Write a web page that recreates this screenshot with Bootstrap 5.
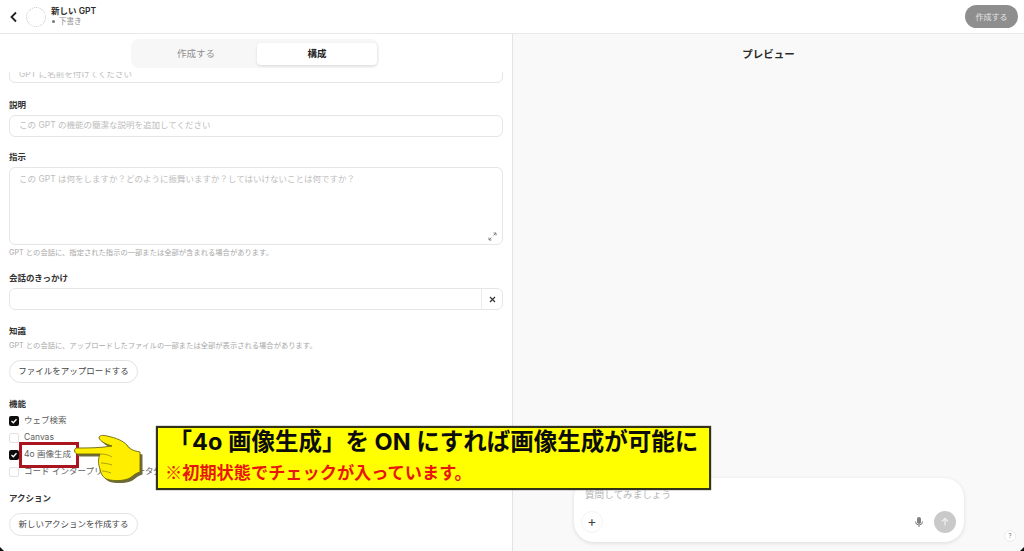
<!DOCTYPE html>
<html lang="ja"><head><meta charset="utf-8"><title>新しい GPT</title>
<link href="https://cdn.jsdelivr.net/npm/bootstrap@5.3.0/dist/css/bootstrap.min.css" rel="stylesheet">
<style>
html,body{height:551px;overflow:hidden;background:#fff}
body{font-family:"Inter","Noto Sans CJK JP",sans-serif;font-size:8.5px;color:#222;position:relative}
.top-bar{height:34px;border-bottom:1px solid #e8e8e8;padding:0 6px 0 9px}
.ghost-avatar{width:20px;height:20px;border:1px dotted #c4c4c4;border-radius:50%;margin:0 5px 0 8px}
.gpt-title{font-size:8.5px;font-weight:600;line-height:11px;color:#2b2b2b}
.gpt-sub{font-size:7.5px;line-height:10px;color:#8a8a8a}
.mini-dot{display:inline-block;width:3px;height:3px;border-radius:50%;background:#777;margin:0 4px 1px 1px}
.make-btn{width:53px;height:23px;background:#8e8e8e;color:#e4e4e4;font-size:8px;border-radius:12px;border:0;padding:0}
.split{height:517px}
.pane-left{width:513px;border-right:1px solid #e3e3e3;padding:31px 9px 0 9px;position:relative;overflow:hidden;flex:none}
.pane-left::before{content:"";position:absolute;left:0;right:0;top:0;height:38px;background:#fff;z-index:1}
.pane-right{flex:1;background:#f9f9f9;position:relative}
.tabs-pill{position:absolute;left:131px;top:5px;width:248px;height:29px;background:#f7f7f7;border-radius:8px;padding:4px 2px 3px 4px;z-index:2}
.tab-item{flex:1;font-size:9.500px;color:#8f8f8f;text-align:center;line-height:22px}
.tab-item.on{background:#fff;color:#222;font-weight:700;border-radius:4px;box-shadow:0 1px 3px rgba(0,0,0,.12);flex:none;width:120px}
.tab-off{width:122px;flex:none}
.fake-input{height:22px;border:1px solid #e6e6e6;border-radius:6px;padding:0 9px;color:#bdbdbd;font-size:8.5px;line-height:19px;background:#fff;margin-bottom:14px}
.clip-input{margin-bottom:16px;height:18px;line-height:12px;padding-top:2px;overflow:hidden}
.fld-label{font-size:8.5px;font-weight:700;color:#333;line-height:12px;margin-bottom:4px}
.area-box{height:78px;border:1px solid #e6e6e6;border-radius:6px;padding:5px 9px;color:#bdbdbd;line-height:12px;position:relative;margin-bottom:2px}
.grow-ico{position:absolute;right:5px;bottom:3px}
.hint{font-size:7.3px;line-height:11px;color:#a8a8a8}
.hint-a{margin-bottom:14px}
.hint-b{margin-bottom:9px;margin-top:-1px}
.x-cell{width:21px;border-left:1px solid #ececec;color:#333}
.start-row{height:22px;border:1px solid #e6e6e6;border-radius:6px;margin-bottom:15px}
.pill-btn{width:129px;height:23px;border:1px solid #e3e3e3;border-radius:12px;background:#fff;font-size:8.5px;color:#444;padding:0;display:block}
.gap-after{margin-bottom:15px}
.feat-label{margin-bottom:2px}
.act-label{margin-bottom:9px}
.chk-row{height:17px;font-size:8.5px;color:#5e5e5e;line-height:17px}
.chk-last{margin-bottom:12px}
.chk-on,.chk-off{width:10px;height:10px;border-radius:2px;flex:none;margin-right:5px}
.chk-on{background:#0d0d0d;display:flex;align-items:center;justify-content:center}
.chk-off{border:1px solid #e2e2e2}
.preview-ttl{font-size:10.500px;font-weight:700;line-height:14px;color:#2b2b2b;padding-top:14px;text-align:center}
.chat-box{position:absolute;left:61px;top:444px;width:390px;height:64px;background:#fff;border-radius:20px;box-shadow:0 1px 4px rgba(0,0,0,.12);padding:10px 8px 9px 11px}
.chat-ph{color:#b5b5b5;font-size:9.600px;line-height:14px}
.send-dot{width:22px;height:22px;border-radius:50%;background:#c9c9c9}
.plus-dot{width:22px;height:22px;border-radius:50%;margin-left:-4px;color:#444;font-size:14px;line-height:18px;text-align:center;border:1px solid #f4f4f4}
.mic-ico{margin-right:10px}
.qmark{position:absolute;left:491px;top:496px;width:12px;height:12px;border:1px solid #ececec;border-radius:50%;text-align:center;font-size:6px;line-height:10px;color:#777;background:#fff}
.callout{position:absolute;left:156px;top:426px;width:555px;height:64px;background:#ff0;border:2px solid #33331a;box-shadow:0 0 1px #333;z-index:5;padding:0 7px}
.call-main{font-size:23.500px;font-weight:700;color:#0c0c0c;line-height:28px;text-align:center;white-space:nowrap;font-family:"Inter","Noto Sans CJK JP",sans-serif}
.call-sub{font-size:17.200px;font-weight:700;color:#e8170e;line-height:26px;margin-top:3px;white-space:nowrap;font-family:"Noto Sans CJK JP",sans-serif}
.red-frame{position:absolute;left:19px;top:442px;width:60px;height:26px;border:3px solid #a9151f;z-index:3}
.hand-ico{position:absolute;left:74px;top:434px;z-index:4}
.corner-a,.corner-b{position:absolute;width:4px;height:4px;background:#111;z-index:6;bottom:0}
.corner-a{left:0;clip-path:polygon(0 0,0 100%,100% 100%)}
.corner-b{right:0;clip-path:polygon(100% 0,100% 100%,0 100%)}
</style></head><body>
<div class="top-bar d-flex align-items-center">
  <svg width="9" height="12" viewBox="0 0 9 12"><path d="M7 1.500 2.500 6 7 10.500" fill="none" stroke="#222" stroke-width="1.800"/></svg>
  <div class="ghost-avatar"></div>
  <div><div class="gpt-title">新しい GPT</div><div class="gpt-sub"><span class="mini-dot"></span>下書き</div></div>
  <button class="make-btn ms-auto" type="button">作成する</button>
</div>
<div class="split d-flex">
  <div class="pane-left">
    <div class="tabs-pill d-flex"><div class="tab-item tab-off">作成する</div><div class="tab-item on">構成</div></div>
    <div class="fake-input clip-input">GPT に名前を付けてください</div>
    <div class="fld-label">説明</div>
    <div class="fake-input">この GPT の機能の簡潔な説明を追加してください</div>
    <div class="fld-label">指示</div>
    <div class="area-box">この GPT は何をしますか？どのように振舞いますか？してはいけないことは何ですか？
      <svg class="grow-ico" width="9" height="9" viewBox="0 0 9 9"><path d="M5.500 1H8v2.500M3.500 8H1V5.500M8 1 5.500 3.500M1 8l2.500-2.500" fill="none" stroke="#777" stroke-width=".9"/></svg>
    </div>
    <div class="hint hint-a">GPT との会話に、指定された指示の一部または全部が含まれる場合があります。</div>
    <div class="fld-label">会話のきっかけ</div>
    <div class="start-row d-flex justify-content-end"><div class="x-cell d-flex align-items-center justify-content-center"><svg width="7" height="7" viewBox="0 0 7 7"><path d="m1 1 5 5M6 1 1 6" stroke="#333" stroke-width="1.200"/></svg></div></div>
    <div class="fld-label">知識</div>
    <div class="hint hint-b">GPT との会話に、アップロードしたファイルの一部または全部が表示される場合があります。</div>
    <button class="pill-btn gap-after" type="button">ファイルをアップロードする</button>
    <div class="fld-label feat-label">機能</div>
    <div class="chk-row d-flex align-items-center"><span class="chk-on"><svg width="8" height="8" viewBox="0 0 8 8"><path d="m1.500 4 1.800 1.800L6.500 2.300" fill="none" stroke="#fff" stroke-width="1.300"/></svg></span><span>ウェブ検索</span></div>
    <div class="chk-row d-flex align-items-center"><span class="chk-off"></span><span>Canvas</span></div>
    <div class="chk-row d-flex align-items-center"><span class="chk-on"><svg width="8" height="8" viewBox="0 0 8 8"><path d="m1.500 4 1.800 1.800L6.500 2.300" fill="none" stroke="#fff" stroke-width="1.300"/></svg></span><span>4o 画像生成</span></div>
    <div class="chk-row chk-last d-flex align-items-center"><span class="chk-off"></span><span>コード インタープリターとデータ分析</span></div>
    <div class="fld-label act-label">アクション</div>
    <button class="pill-btn" type="button">新しいアクションを作成する</button>
  </div>
  <div class="pane-right">
    <div class="preview-ttl">プレビュー</div>
    <div class="chat-box d-flex flex-column justify-content-between">
      <div class="chat-ph">質問してみましょう</div>
      <div class="d-flex align-items-center">
        <div class="plus-dot">+</div>
        <svg class="ms-auto mic-ico" width="10" height="12" viewBox="0 0 10 12"><rect x="3" y="1" width="4" height="7" rx="2" fill="#808080"/><path d="M1.500 5.500a3.500 3.500 0 0 0 7 0M5 9v2" fill="none" stroke="#808080"/></svg>
        <div class="send-dot d-flex align-items-center justify-content-center"><svg width="10" height="10" viewBox="0 0 10 10"><path d="M5 8.500v-7M2 4.500l3-3 3 3" fill="none" stroke="#eee" stroke-width="1.300"/></svg></div>
      </div>
    </div>
    <div class="qmark">?</div>
  </div>
</div>
<div class="red-frame"></div>
<svg class="hand-ico" width="72" height="52" viewBox="0 0 72 52">
  <path d="M2 14C14 14 26 14 38 12C31 10 26 7 25 4C25 1 29 1 33 2C43 4 49 7 53 11C55 15 60 17 66 18V38C62 39 60 41 56 44C50 47 42 47 36 46C30 45 27 41 26 35C24 30 24 25 26 20C18 20 10 20 3 20C0 19 0 15 2 14Z" fill="#6e6a3a" transform="translate(2.500 2.500)"/>
  <path d="M2 14C14 14 26 14 38 12C31 10 26 7 25 4C25 1 29 1 33 2C43 4 49 7 53 11C55 15 60 17 66 18V38C62 39 60 41 56 44C50 47 42 47 36 46C30 45 27 41 26 35C24 30 24 25 26 20C18 20 10 20 3 20C0 19 0 15 2 14Z" fill="#ffee00" stroke="#6a6510" stroke-width=".9"/>
  <path d="M26 20C31 20 35 21 38 23M27 29C31 29 35 30 38 31M28 37C31 37 34 38 37 39" fill="none" stroke="#8a8410" stroke-width=".7"/>
</svg>
<div class="callout">
  <div class="call-main">「4o 画像生成」を ON にすれば画像生成が可能に</div>
  <div class="call-sub">※初期状態でチェックが入っています。</div>
</div>
<div class="corner-a"></div><div class="corner-b"></div>
<script src="https://cdn.jsdelivr.net/npm/bootstrap@5.3.0/dist/js/bootstrap.bundle.min.js"></script>
</body></html>
